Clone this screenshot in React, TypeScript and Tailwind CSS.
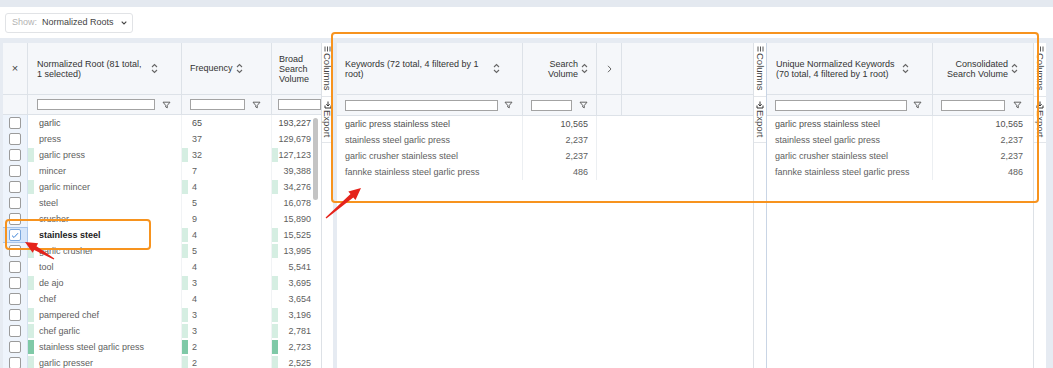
import React from "react";

type Root = { name: string; freq: number; vol: string; bars: number[] };
type Kw = { name: string; vol: string };

const roots: Root[] = [
  { name: "garlic", freq: 65, vol: "193,227", bars: [0, 0, 0] },
  { name: "press", freq: 37, vol: "129,679", bars: [0, 0, 0] },
  { name: "garlic press", freq: 32, vol: "127,123", bars: [1, 1, 1] },
  { name: "mincer", freq: 7, vol: "39,388", bars: [0, 0, 0] },
  { name: "garlic mincer", freq: 4, vol: "34,276", bars: [1, 1, 1] },
  { name: "steel", freq: 5, vol: "16,078", bars: [0, 0, 0] },
  { name: "crusher", freq: 9, vol: "15,890", bars: [0, 0, 0] },
  { name: "stainless steel", freq: 4, vol: "15,525", bars: [0, 1, 1] },
  { name: "garlic crusher", freq: 5, vol: "13,995", bars: [1, 1, 1] },
  { name: "tool", freq: 4, vol: "5,541", bars: [0, 0, 0] },
  { name: "de ajo", freq: 3, vol: "3,695", bars: [1, 1, 1] },
  { name: "chef", freq: 4, vol: "3,654", bars: [0, 0, 0] },
  { name: "pampered chef", freq: 3, vol: "3,196", bars: [1, 1, 1] },
  { name: "chef garlic", freq: 3, vol: "2,781", bars: [1, 1, 1] },
  { name: "stainless steel garlic press", freq: 2, vol: "2,723", bars: [2, 2, 2] },
  { name: "garlic presser", freq: 2, vol: "2,525", bars: [1, 1, 1] },
];

const keywords: Kw[] = [
  { name: "garlic press stainless steel", vol: "10,565" },
  { name: "stainless steel garlic press", vol: "2,237" },
  { name: "garlic crusher stainless steel", vol: "2,237" },
  { name: "fannke stainless steel garlic press", vol: "486" },
];

const BAR = ["bg-transparent", "bg-[#d5eee2]", "bg-[#7fc9a7]"];

// first row reads a little darker than the rest
const tone = (i: number) => (i === 0 ? "text-[#505050]" : "text-[#5e5e5e]");

const SortIcon = () => (
  <svg width="7" height="11" viewBox="0 0 7 11" fill="none" stroke="#666" strokeWidth="1.1" className="shrink-0">
    <path d="M1 4L3.5 1.5L6 4" />
    <path d="M1 7L3.5 9.5L6 7" />
  </svg>
);

const FunnelIcon = () => (
  <svg width="9" height="8" viewBox="0 0 9 8" fill="none" stroke="#555" strokeWidth="0.9" className="shrink-0">
    <path d="M1 1.2H8L5.3 4.4V6.8L3.7 6V4.4Z" strokeLinejoin="round" />
  </svg>
);

const ColumnsIcon = () => (
  <svg width="7" height="6" viewBox="0 0 7 6" stroke="#444" strokeWidth="0.9">
    <path d="M1 0.5V5.5M3.5 0.5V5.5M6 0.5V5.5" />
  </svg>
);

const ExportIcon = () => (
  <svg width="8" height="8" viewBox="0 0 8 8" fill="none" stroke="#333" strokeWidth="1">
    <path d="M1 4.5V7H7V4.5" />
    <path d="M4 0.5V5M2.3 3.3L4 5L5.7 3.3" />
  </svg>
);

const Checkbox = ({ checked }: { checked?: boolean }) => (
  <div
    className={`w-[12px] h-[12px] rounded-[2px] border bg-white flex items-center justify-center ${
      checked ? "border-[#7aa7dd]" : "border-[#9b9b9b]"
    }`}>
    {checked && (
      <svg width="8" height="7" viewBox="0 0 8 7" fill="none" stroke="#3b82d6" strokeWidth="1">
        <path d="M1 3.6L3 5.5L7 1.2" />
      </svg>
    )}
  </div>
);

const FilterInput = ({ w }: { w: string }) => (
  <div className={`${w} h-[11px] bg-white border border-[#a3a3a3] shrink-0`} />
);

const Sidebar = () => (
  <div className="h-full bg-white border-l border-[#dde1e6] flex flex-col shrink-0 w-full">
    <div className="h-[54px] border-b border-[#e3e6ea] flex flex-col items-center pt-[3px]">
      <ColumnsIcon />
      <span className="[writing-mode:vertical-rl] text-[9.5px] leading-[11px] text-[#444] mt-[1px]">Columns</span>
    </div>
    <div className="h-[46px] border-b border-[#e3e6ea] flex flex-col items-center pt-[4px]">
      <ExportIcon />
      <span className="[writing-mode:vertical-rl] text-[9.5px] leading-[11px] text-[#444] mt-[1px]">Export</span>
    </div>
  </div>
);

function arrow(tx: number, ty: number, hx: number, hy: number) {
  const dx = hx - tx;
  const dy = hy - ty;
  const L = Math.hypot(dx, dy);
  const ux = dx / L;
  const uy = dy / L;
  const nx = -uy;
  const ny = ux;
  const headLen = 12;
  const headW = 5.5;
  const bx = hx - ux * headLen;
  const by = hy - uy * headLen;
  const p = (x: number, y: number) => `${x.toFixed(1)},${y.toFixed(1)}`;
  return [
    p(tx + nx * 0.6, ty + ny * 0.6),
    p(bx + nx * 2.2, by + ny * 2.2),
    p(bx + nx * headW, by + ny * headW),
    p(hx, hy),
    p(bx - nx * headW, by - ny * headW),
    p(bx - nx * 2.2, by - ny * 2.2),
    p(tx - nx * 0.6, ty - ny * 0.6),
  ].join(" ");
}

const LeftTable = () => (
  <div className="w-[318px] h-full bg-white flex flex-col shrink-0">
    {/* header */}
    <div className="flex h-[52px] bg-[#f5f7fa] border-b border-[#dde2e8] text-[#333]">
      <div className="w-[25px] border-r border-[#dde2e8] flex items-center justify-center text-[11px] text-[#444]">
        ×
      </div>
      <div className="w-[154px] border-r border-[#dde2e8] flex items-center pl-[9px] pr-[23px] justify-between leading-[10px]">
        <span>
          Normalized Root (81 total,
          <br />1 selected)
        </span>
        <SortIcon />
      </div>
      <div className="w-[90px] border-r border-[#dde2e8] flex items-center pl-[8px] gap-[3px]">
        <span>Frequency</span>
        <SortIcon />
      </div>
      <div className="w-[49px] flex items-center pl-[7px] leading-[10px]">
        <span>
          Broad
          <br />
          Search
          <br />
          Volume
        </span>
      </div>
    </div>
    {/* filters */}
    <div className="flex h-[20px] bg-[#f5f7fa] border-b border-[#dde2e8]">
      <div className="w-[25px] border-r border-[#dde2e8]" />
      <div className="w-[154px] border-r border-[#dde2e8] flex items-center pl-[9px] pr-[10px] justify-between">
        <FilterInput w="w-[118px]" />
        <FunnelIcon />
      </div>
      <div className="w-[90px] border-r border-[#dde2e8] flex items-center pl-[8px] pr-[10px] justify-between">
        <FilterInput w="w-[55px]" />
        <FunnelIcon />
      </div>
      <div className="w-[49px] flex items-center pl-[6px]">
        <FilterInput w="w-[43px]" />
      </div>
    </div>
    {/* rows */}
    <div className="relative flex-1 overflow-hidden">
      {roots.map((r, i) => {
        const sel = r.name === "stainless steel";
        return (
          <div key={r.name} className="flex h-[16px] leading-[16px]">
            <div
              className={`w-[25px] flex items-center justify-center border-r ${
                sel ? "bg-[#d6e6fa] border-[#a9c5ea] border-y" : "bg-[#eef4fc] border-[#d6e2f0]"
              }`}>
              <Checkbox checked={sel} />
            </div>
            <div className="w-[154px] flex border-r border-[#f1f3f5]">
              <div className={`w-[6px] my-[1px] ${BAR[r.bars[0]]}`} />
              <span className={`pl-[5px] ${sel ? "font-bold text-[#222]" : tone(i)}`}>{r.name}</span>
            </div>
            <div className="w-[90px] flex border-r border-[#f1f3f5]">
              <div className={`w-[6px] my-[1px] ${BAR[r.bars[1]]}`} />
              <span className={`pl-[4px] ${tone(i)}`}>{r.freq}</span>
            </div>
            <div className="w-[49px] flex">
              <div className={`w-[6px] my-[1px] ${BAR[r.bars[2]]}`} />
              <span className={`flex-1 text-right pr-[10px] ${tone(i)}`}>{r.vol}</span>
            </div>
          </div>
        );
      })}
      <div className="absolute right-[3px] top-[3px] w-[5px] h-[82px] rounded-[3px] bg-[#c4c4c4]" />
    </div>
  </div>
);

const MiddleTable = () => (
  <div className="w-[416px] h-full bg-white flex flex-col shrink-0">
    <div className="flex h-[52px] bg-[#f5f7fa] border-b border-[#dde2e8] text-[#333]">
      <div className="w-[186px] border-r border-[#dde2e8] flex items-center pl-[8px] pr-[22px] justify-between leading-[10px]">
        <span>
          Keywords (72 total, 4 filtered by 1
          <br />
          root)
        </span>
        <SortIcon />
      </div>
      <div className="w-[74px] border-r border-[#dde2e8] flex items-center justify-end pr-[8px] gap-[3px] leading-[10px]">
        <span className="text-right">
          Search
          <br />
          Volume
        </span>
        <SortIcon />
      </div>
      <div className="w-[25px] border-r border-[#dde2e8] flex items-center justify-center">
        <svg width="5" height="8" viewBox="0 0 5 8" fill="none" stroke="#666" strokeWidth="1">
          <path d="M1 0.8L4 4L1 7.2" />
        </svg>
      </div>
      <div className="flex-1" />
    </div>
    <div className="flex h-[21px] bg-[#f5f7fa] border-b border-[#dde2e8]">
      <div className="w-[186px] border-r border-[#dde2e8] flex items-center pl-[8px] pr-[9px] justify-between">
        <FilterInput w="w-[153px]" />
        <FunnelIcon />
      </div>
      <div className="w-[74px] border-r border-[#dde2e8] flex items-center pl-[8px] pr-[8px] justify-between">
        <FilterInput w="w-[41px]" />
        <FunnelIcon />
      </div>
      <div className="w-[25px] border-r border-[#dde2e8]" />
      <div className="flex-1" />
    </div>
    <div className="flex flex-col">
      {keywords.map((k, i) => (
        <div key={k.name} className="flex h-[16px] leading-[16px]">
          <div className={`w-[186px] border-r border-[#eceff2] pl-[8px] ${tone(i)}`}>{k.name}</div>
          <div className={`w-[74px] border-r border-[#eceff2] text-right pr-[8px] ${tone(i)}`}>{k.vol}</div>
        </div>
      ))}
    </div>
  </div>
);

const RightTable = () => (
  <div className="w-[266px] h-full bg-white flex flex-col shrink-0">
    <div className="flex h-[52px] bg-[#f5f7fa] border-b border-[#dde2e8] text-[#333]">
      <div className="w-[166px] border-r border-[#dde2e8] flex items-center pl-[9px] pr-[23px] justify-between leading-[10px]">
        <span>
          Unique Normalized Keywords
          <br />
          (70 total, 4 filtered by 1 root)
        </span>
        <SortIcon />
      </div>
      <div className="w-[100px] flex items-center justify-end pr-[15px] gap-[3px] leading-[10px]">
        <span className="text-right">
          Consolidated
          <br />
          Search Volume
        </span>
        <SortIcon />
      </div>
    </div>
    <div className="flex h-[21px] bg-[#f5f7fa] border-b border-[#dde2e8]">
      <div className="w-[166px] border-r border-[#dde2e8] flex items-center pl-[8px] pr-[10px] justify-between">
        <FilterInput w="w-[132px]" />
        <FunnelIcon />
      </div>
      <div className="w-[100px] flex items-center pl-[8px] pr-[11px] justify-between">
        <FilterInput w="w-[64px]" />
        <FunnelIcon />
      </div>
    </div>
    <div className="flex flex-col">
      {keywords.map((k, i) => (
        <div key={k.name} className="flex h-[16px] leading-[16px]">
          <div className={`w-[166px] border-r border-[#eceff2] pl-[8px] ${tone(i)}`}>{k.name}</div>
          <div className={`w-[100px] text-right pr-[10px] ${tone(i)}`}>{k.vol}</div>
        </div>
      ))}
    </div>
  </div>
);

export default function App() {
  return (
    <div className="relative w-[1053px] h-[368px] overflow-hidden bg-white text-[9px] font-['Liberation_Sans',Arial,sans-serif]">
      <div className="h-[7px] bg-[#e4e9f0]" />

      {/* toolbar */}
      <div className="h-[31px] pl-[5px] pt-[6px]">
        <div className="w-[128px] h-[20px] border border-[#e1e3e6] rounded-[3px] flex items-center pl-[6px] gap-[5px]">
          <span className="text-[#b3b3b3]">Show:</span>
          <span className="text-[#444]">Normalized Roots</span>
          <svg width="6" height="4" viewBox="0 0 6 4" fill="none" stroke="#444" strokeWidth="1.1" className="ml-[2px]">
            <path d="M0.7 0.7L3 3L5.3 0.7" />
          </svg>
        </div>
      </div>

      {/* panels */}
      <div className="flex h-[330px] bg-[#e6ebf2] pt-[5px] pl-[3px]">
        <div className="flex w-[330px] h-full bg-white shrink-0">
          <LeftTable />
          <div className="w-[12px] h-full">
            <Sidebar />
          </div>
        </div>
        <div className="w-[4px] shrink-0" />
        <div className="flex w-[429px] h-full bg-white shrink-0">
          <MiddleTable />
          <div className="w-[13px] h-full">
            <Sidebar />
          </div>
        </div>
        <div className="flex w-[280px] h-full bg-white border-l border-[#c9d5e5] shrink-0">
          <RightTable />
          <div className="w-[13px] h-full">
            <Sidebar />
          </div>
        </div>
      </div>

      {/* annotations */}
      <div className="absolute left-[331px] top-[32px] w-[708px] h-[171px] border-2 border-[#f7931e] rounded-[4px] pointer-events-none" />
      <div className="absolute left-[5px] top-[219px] w-[146px] h-[31px] border-2 border-[#f7931e] rounded-[4px] pointer-events-none" />
      <svg className="absolute left-0 top-0 pointer-events-none" width="1053" height="368">
        <polygon points={arrow(326, 218, 361, 188)} fill="#e5231b" />
        <polygon points={arrow(54, 259, 25, 242)} fill="#e5231b" />
      </svg>
    </div>
  );
}
